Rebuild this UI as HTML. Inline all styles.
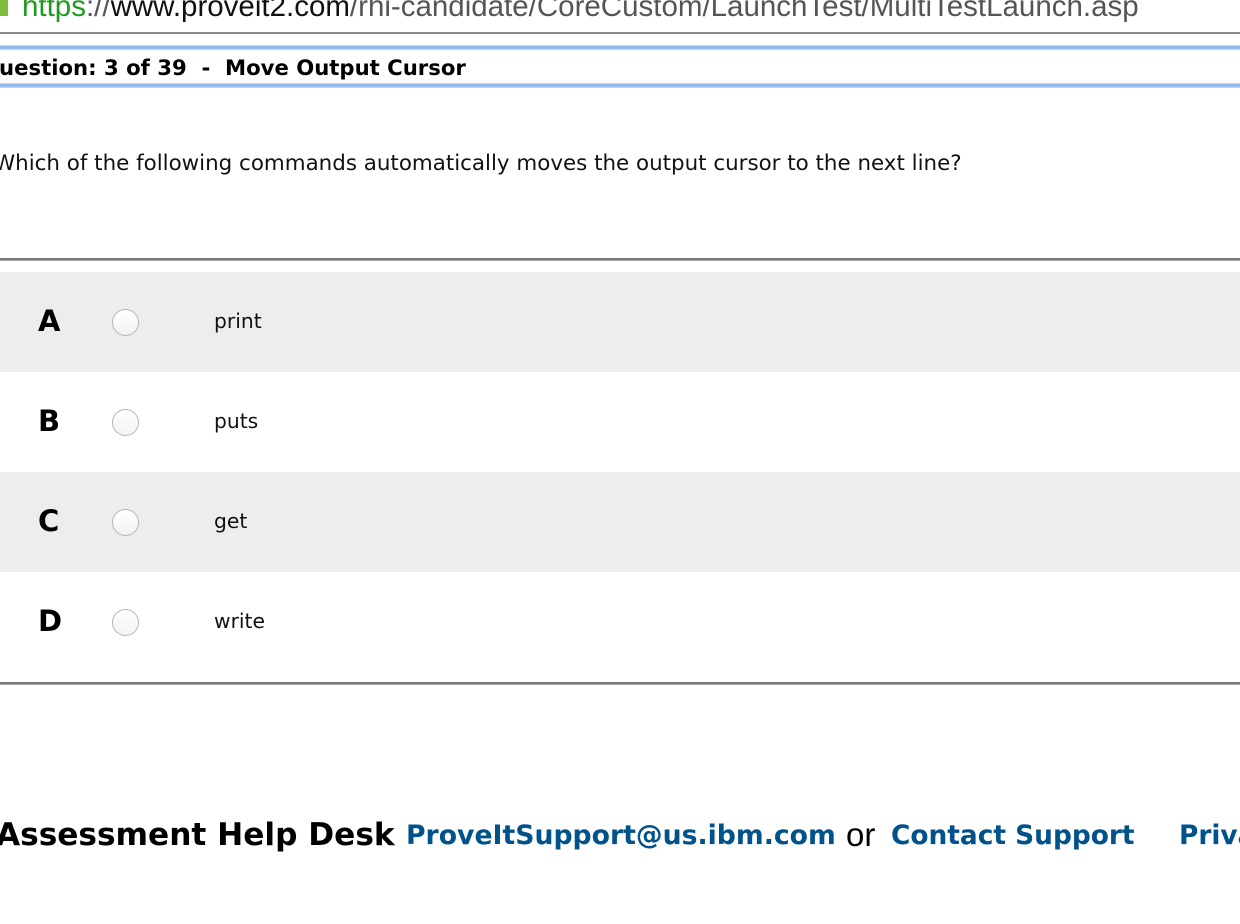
<!DOCTYPE html>
<html><head><meta charset="utf-8"><style>
body{margin:0;width:1240px;height:924px;overflow:hidden;background:#fff;font-family:"DejaVu Sans","Liberation Sans",sans-serif;position:relative}
.a{position:absolute;white-space:nowrap}
.row{position:absolute;left:0;width:1240px;height:100px}
.L{position:absolute;left:38px;top:32px;font-weight:bold;font-size:29px;color:#000}
.R{position:absolute;left:112px;top:37px;width:27px;height:27px;border-radius:50%;border:1px solid #b5b5b5;background:linear-gradient(#fff,#f3f3f3);box-sizing:border-box}
.T{position:absolute;left:214px;top:37px;font-size:20.3px;color:#111}
.blue{color:#00528a;font-weight:bold}
</style></head><body>
<div class="a" style="left:0;top:-10px;font-family:'Liberation Sans',sans-serif;font-size:29.5px;color:#555"><span style="display:inline-block;width:8px;height:18px;background:#7cbc3a;margin-right:14px"></span><span style="color:#1e9a1e">https</span>://<span style="color:#111">www.proveit2.com</span>/rhi-candidate/CoreCustom/LaunchTest/MultiTestLaunch.asp</div>
<div class="a" style="left:0;top:32px;width:1240px;height:2px;background:#8a8a8a"></div>
<div class="a" style="left:0;top:45px;width:1240px;height:5px;background:linear-gradient(#c7dcf5,#7fb0ef,#c7dcf5)"></div>
<div class="a" style="left:-1px;top:55px;font-size:21.2px;font-weight:bold;color:#000">uestion: 3 of 39&nbsp; -&nbsp; Move Output Cursor</div>
<div class="a" style="left:0;top:83px;width:1240px;height:5px;background:linear-gradient(#c7dcf5,#7fb0ef,#c7dcf5)"></div>
<div class="a" style="left:-6px;top:151px;font-size:21.4px;color:#111">Which of the following commands automatically moves the output cursor to the next line?</div>
<div class="a" style="left:0;top:258px;width:1240px;height:3px;background:linear-gradient(#7a7a7a,#7a7a7a 66%,#ccc)"></div>
<div class="row" style="top:272px;background:#ededed"><span class="L">A</span><span class="R"></span><span class="T">print</span></div>
<div class="row" style="top:372px;background:#fff"><span class="L">B</span><span class="R"></span><span class="T">puts</span></div>
<div class="row" style="top:472px;background:#ededed"><span class="L">C</span><span class="R"></span><span class="T">get</span></div>
<div class="row" style="top:572px;background:#fff"><span class="L">D</span><span class="R"></span><span class="T">write</span></div>
<div class="a" style="left:0;top:682px;width:1240px;height:3px;background:linear-gradient(#7a7a7a,#7a7a7a 66%,#ccc)"></div>
<div class="a" style="left:-4px;top:817px;font-size:31.2px;font-weight:bold;color:#000">Assessment Help Desk</div>
<div class="a blue" style="left:406px;top:820px;font-size:26.7px">ProveItSupport@us.ibm.com</div>
<div class="a" style="left:846px;top:816px;font-size:33px;color:#000;font-family:'Liberation Sans',sans-serif">or</div>
<div class="a blue" style="left:891px;top:820px;font-size:26.4px">Contact Support</div>
<div class="a blue" style="left:1179px;top:820px;font-size:26.4px">Privacy</div>
</body></html>
